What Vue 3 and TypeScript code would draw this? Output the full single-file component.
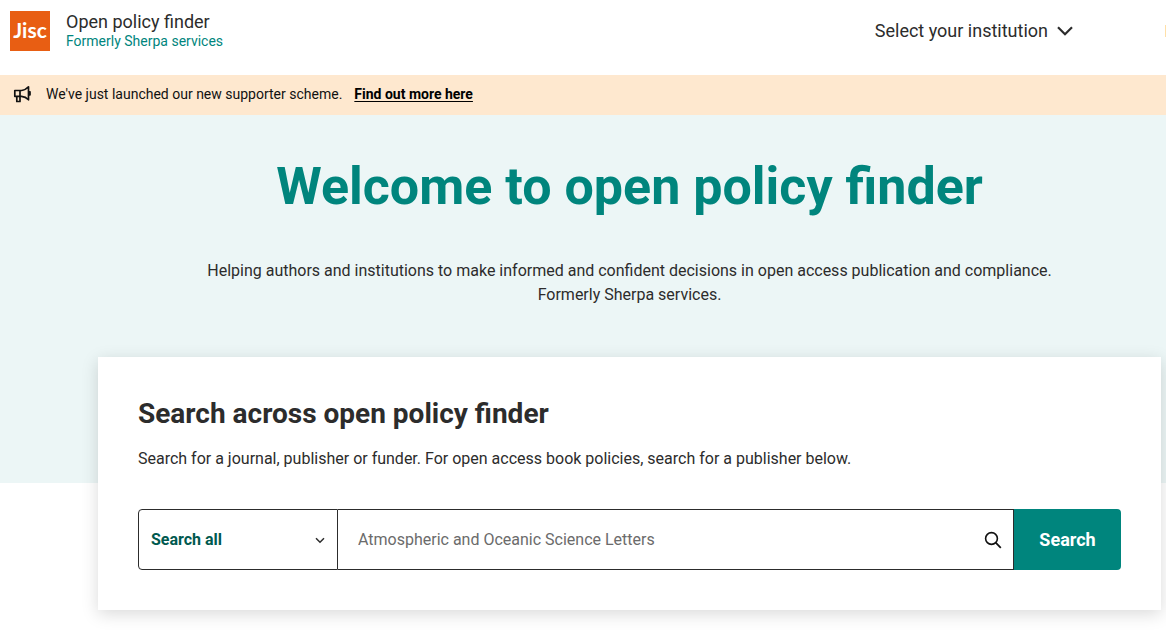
<script setup lang="ts">
import { ref } from 'vue'

const scopes: string[] = ['Search all', 'Publications', 'Publishers', 'Funders']
const scope = ref<string>('Search all')
const query = ref<string>('')
</script>

<template>
  <div class="page">
    <header class="header">
      <a class="brand" href="#">
        <svg class="logo" viewBox="0 0 40 40" role="img" aria-label="Jisc">
          <rect width="40" height="40" fill="#e85e13" />
          <text x="20" y="27" text-anchor="middle" class="logo-text">Jisc</text>
        </svg>
        <span class="brand-text">
          <span class="brand-name">Open policy finder</span>
          <span class="brand-sub">Formerly Sherpa services</span>
        </span>
      </a>
      <button class="institution" type="button">
        Select your institution
        <svg class="chevron" viewBox="0 0 16 10" aria-hidden="true">
          <path d="M1 1.2 8 8.2 15 1.2" fill="none" stroke="#2c2c2c" stroke-width="2.2" />
        </svg>
      </button>
      <span class="edge" aria-hidden="true"></span>
    </header>

    <div class="notice">
      <svg class="megaphone" viewBox="0 0 18 18" aria-hidden="true">
        <path
          d="M1.800 5.500H8.500C11 5.300 13.500 4 15.500 1.800V14.800C13.500 12.600 11 11.500 8.500 11.300H1.800ZM7 5.500V11.300M3.800 11.300V16.500H7V11.300M15.700 6.800H17V9.800H15.700"
          fill="none" stroke="#111" stroke-width="1.700" stroke-linejoin="round"
        />
      </svg>
      <span>We've just launched our new supporter scheme.</span>
      <a class="notice-link" href="#">Find out more here</a>
    </div>

    <main class="main">
      <section class="hero">
        <h1>Welcome to open policy finder</h1>
        <p>
          Helping authors and institutions to make informed and confident decisions in open access
          publication and compliance.<br />Formerly Sherpa services.
        </p>
      </section>

      <section class="card">
        <h2>Search across open policy finder</h2>
        <p>Search for a journal, publisher or funder. For open access book policies, search for a publisher below.</p>
        <form class="search" @submit.prevent>
          <div class="scope">
            <select v-model="scope" aria-label="Search in">
              <option v-for="item in scopes" :key="item">{{ item }}</option>
            </select>
            <svg viewBox="0 0 10 7" aria-hidden="true">
              <path d="M1 1.200 5 5.200 9 1.200" fill="none" stroke="#2c2c2c" stroke-width="1.500" />
            </svg>
          </div>
          <label class="field">
            <input v-model="query" type="text" aria-label="Search term" placeholder="Atmospheric and Oceanic Science Letters" />
            <svg viewBox="0 0 18 18" aria-hidden="true">
              <circle cx="7.500" cy="7.500" r="5.900" fill="none" stroke="#111" stroke-width="1.600" />
              <path d="M11.700 11.700 16.800 16.800" stroke="#111" stroke-width="1.800" />
            </svg>
          </label>
          <button class="submit" type="submit">Search</button>
        </form>
      </section>
    </main>
  </div>
</template>

<style>
body {
  margin: 0;
  background: #fff;
}
</style>

<style scoped>
* {
  box-sizing: border-box;
}
.page {
  font-family: Roboto, 'Liberation Sans', sans-serif;
  font-size: 16px;
  line-height: 24px;
  color: #2c2c2c;
  overflow: hidden;
}
.header {
  display: flex;
  align-items: flex-start;
  min-height: 75px;
  padding: 11px 0 0 10px;
}
.brand {
  display: flex;
  gap: 16px;
  color: inherit;
  text-decoration: none;
}
.logo {
  width: 40px;
  height: 40px;
}
.logo-text {
  font: 700 21px Lato, sans-serif;
  fill: #fff;
}
.brand-text {
  display: flex;
  flex-direction: column;
}
.brand-name {
  font-size: 18px;
  line-height: 22px;
}
.brand-sub {
  font-size: 14px;
  line-height: 16px;
  color: #00857d;
}
.institution {
  display: flex;
  align-items: center;
  gap: 9px;
  margin-left: auto;
  padding: 8px 0;
  border: 0;
  background: none;
  font: inherit;
  font-size: 18px;
  color: inherit;
}
.chevron {
  width: 16px;
  height: 10px;
}
.edge {
  width: 1px;
  height: 12px;
  margin: 14px 0 0 92px;
  background: #ffe0a8;
}
.notice {
  display: flex;
  align-items: center;
  min-height: 40px;
  padding: 0 13px 2px;
  background: #fee8cf;
  color: #111;
  font-size: 14px;
}
.megaphone {
  width: 18px;
  height: 18px;
  margin-right: 15px;
}
.notice-link {
  margin-left: 12px;
  font-weight: 700;
  color: #000;
  text-underline-offset: 2px;
}
.main {
  padding-bottom: 27px;
}
.hero {
  padding: 40px 5px 176px 98px;
  background: #ecf6f6;
  text-align: center;
}
h1 {
  margin: 0;
  font-size: 52px;
  line-height: 64px;
  color: #00857d;
}
.hero p {
  margin: 40px 0 0;
}
.card {
  position: relative;
  margin: -126px 5px 0 98px;
  padding: 40px;
  background: #fff;
  box-shadow: 0 4px 16px rgba(0, 0, 0, 0.15);
}
h2 {
  margin: 0;
  font-size: 28px;
  line-height: 34px;
}
.card p {
  margin: 16px 0 38px;
}
.search {
  display: flex;
  height: 61px;
}
.scope {
  display: flex;
  position: relative;
  flex: 0 0 200px;
}
.scope select {
  width: 100%;
  padding: 0 12px;
  appearance: none;
  border: 1px solid #2c2c2c;
  border-radius: 4px 0 0 4px;
  background: #fff;
  font: inherit;
  font-weight: 700;
  color: #00594f;
}
.scope svg {
  position: absolute;
  right: 13px;
  top: 28px;
  width: 10px;
  height: 7px;
  pointer-events: none;
}
.field {
  display: flex;
  flex: 1;
  align-items: center;
  padding: 0 11px 0 20px;
  border: solid #2c2c2c;
  border-width: 1px 0;
}
.field input {
  flex: 1;
  min-width: 0;
  height: 100%;
  padding: 0;
  border: 0;
  outline: 0;
  font: inherit;
  color: inherit;
}
.field input::placeholder {
  color: #6b6b6b;
  opacity: 1;
}
.field svg {
  width: 18px;
  height: 18px;
}
.submit {
  flex: 0 0 108px;
  border: 0;
  border-left: 1px solid #2c2c2c;
  border-radius: 0 4px 4px 0;
  background: #00857d;
  font: inherit;
  font-size: 18px;
  font-weight: 700;
  color: #fff;
}
</style>
